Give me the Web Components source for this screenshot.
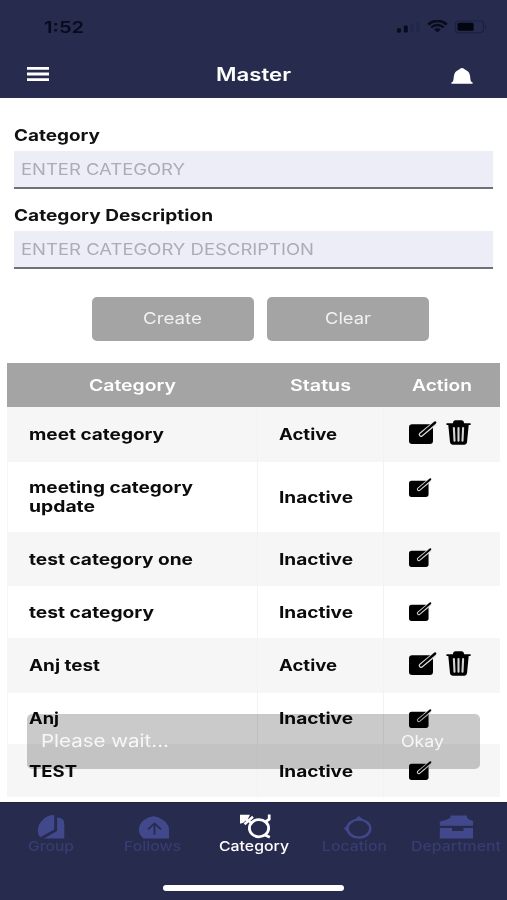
<!DOCTYPE html>
<html lang="en">
<head>
<meta charset="utf-8">
<title>Master</title>
<style>
body{margin:0;background:#fff;font-family:Inter,"Liberation Sans",sans-serif;}
</style>
</head>
<body>
<master-app></master-app>
<script>
// Defines an element whose open shadow root is filled from an HTML string.
function define(name, html, setup) {
  const t = document.createElement('template');
  customElements.define(name, class extends HTMLElement {
    connectedCallback() {
      if (this.shadowRoot) return;
      t.innerHTML = html;
      this.attachShadow({mode: 'open'}).appendChild(t.content.cloneNode(true));
      if (setup) setup(this, this.shadowRoot);
    }
  });
}

// Text widened horizontally to the width given in "w".
define('wide-text', `<style>
:host{display:block;flex:none;white-space:nowrap;line-height:19px}
span{display:inline-block;transform-origin:0 50%;vertical-align:top}
</style><span><slot></slot></span>`, (el, root) => {
  const s = root.querySelector('span'), w = +el.getAttribute('w');
  el.style.width = w + 'px';
  s.style.transform = 'scaleX(' + w / s.getBoundingClientRect().width + ')';
});

define('edit-icon', `<style>
:host{display:block;flex:none;width:22px;height:19px}
:host([large]){width:27px;height:23px}
svg{display:block;width:100%;height:100%;overflow:visible}
</style><svg viewBox="0 0 27 23" preserveAspectRatio="none">
<rect x="0" y="3.2" width="24" height="19.8" rx="3.2" fill="#000"/>
<path d="M12 13.6L25 3" stroke="#dedede" stroke-width="4.6" stroke-linecap="round"/>
<path d="M12 13.6L26.2 1.5" stroke="#000" stroke-width="2.3" stroke-linecap="round"/></svg>`);

define('trash-icon', `<style>
:host{display:block;flex:none;width:25px;height:25px}svg{display:block}
</style><svg width="25" height="25" viewBox="0 0 25 25">
<path d="M.5 3.2H6.8Q7.2 .3 9.2 .3H15.8Q17.8 .3 18.2 3.2H24.6V5H22.7L21 22.3Q20.7 24.7 18.5 24.7H6.6Q4.3 24.7 4 22.3L2.3 5H.5Z"/>
<path d="M7.9 8L8.5 20.8M12.5 8V20.8M17.1 8L16.5 20.8" stroke="#d4d4d4" stroke-width="2.1" stroke-linecap="round"/></svg>`);

define('status-bar', `<style>
:host{display:flex;height:53px;align-items:center;justify-content:space-between;padding:1px 20px 0 44px;box-sizing:border-box;color:#070b1c;font-size:16px;font-weight:600}
svg{display:block}
</style><wide-text w="40">1:52</wide-text>
<svg width="91" height="14" viewBox="396 20 91 14">
<rect x="397" y="28.2" width="4" height="4.5" rx="1.4" fill="#080c1c"/><rect x="403.8" y="25.6" width="4" height="7" rx="1.3" fill="#080c1c"/>
<rect x="410.3" y="23.3" width="3.4" height="9.4" rx="1" fill="#20284a"/><rect x="416.3" y="21" width="3.4" height="11.7" rx="1" fill="#20284a"/>
<g fill="none" stroke="#080c1c"><path d="M428.2 24.4Q437.2 17.2 446.8 24.4" stroke-width="2.6"/><path d="M431.2 27.3Q437.3 22.6 443.7 27.3" stroke-width="2.3"/></g>
<path d="M434 29.3Q437.3 27 440.9 29.3L437.4 32.4Z" fill="#080c1c"/>
<rect x="455.5" y="21" width="28" height="11.7" rx="3" fill="none" stroke="#1b2241" stroke-width="1.2"/><rect x="457.6" y="22.8" width="16" height="8" rx="1.5" fill="#04060f"/><path d="M485 24.5Q487.5 26.6 485 29Z" fill="#1b2241"/></svg>`);

define('title-bar', `<style>
:host{display:grid;grid-template-columns:50px 1fr 50px;height:45px;align-items:center;padding:0 24px 4px 27px;box-sizing:border-box;color:#fff;font-size:18px;font-weight:600}
wide-text{justify-self:center;margin:2px 3px 0 0}
svg{display:block}.b{justify-self:end;margin-top:4px;margin-right:10px}
</style><svg width="22" height="14" viewBox="0 0 22 14"><path d="M0 1.4H22M0 7H22M0 12.6H22" stroke="#fff" stroke-width="2.8"/></svg>
<wide-text w="75">Master</wide-text>
<svg class="b" width="22" height="17" viewBox="0 0 22 17"><path fill="#fff" d="M.4 16.8V15.6L2 14.5C3 12 2.3 7 5 4.6C6.5 3.2 8 2.8 9 1.8Q11 .1 13 1.8C14 2.8 15.5 3.2 17 4.6C19.7 7 19 12 20 14.5L21.6 15.6V16.8Z"/></svg>`);

define('form-field', `<style>
:host{display:block;height:80px}
.l{height:26.5px;display:flex;align-items:center;font-size:16px;font-weight:700;color:#111;padding-bottom:4px;box-sizing:border-box}
.i{height:38.5px;display:flex;align-items:center;box-sizing:border-box;padding:1px 7px 0;background:#ecedf6;border-bottom:2px solid #707176;font-size:16px;color:#acadb4}
</style><div class="l"><slot name="label"></slot></div><div class="i"><slot></slot></div>`);

define('app-button', `<style>
:host{display:flex;width:162px;height:44px;align-items:center;justify-content:center;background:#a4a4a4;border-radius:5px;color:#f1f1f1;font-size:16px}
</style><slot></slot>`);

define('table-head', `<style>
:host{display:grid;grid-template-columns:250px 126px 1fr;height:44px;padding-top:1px;box-sizing:border-box;background:#a4a4a4;color:#fff;font-size:16px;font-weight:600;align-items:center;justify-items:center}
</style><slot></slot>`);

define('category-row', `<style>
:host{display:grid;grid-template-columns:250px 126px 1fr;box-sizing:border-box;background:#fff;color:#0b0b0b;font-size:16px;font-weight:650;border-left:1px solid #f5f5f5}
:host([shade]){background:#f6f6f6}
div{display:flex;box-sizing:border-box}
.n{flex-direction:column;justify-content:center;padding:1px 0 0 21px;border-right:1px solid #f2f2f2}
.s{align-items:center;padding:1px 0 0 21px;border-right:1px solid #f2f2f2}
.a{align-items:flex-start;gap:11px;padding:16px 0 0 25px}
:host([active]) .a{padding-top:14px}
:host([last]) .n,:host([last]) .s{padding-top:3px}
:host([last]) .a{padding-top:17px}
trash-icon{margin:-1px 0 0 -1px}
</style><div class="n"><slot></slot></div><div class="s"></div><div class="a"></div>`, (el, root) => {
  const on = el.hasAttribute('active');
  root.querySelector('.s').innerHTML = on ? '<wide-text w="58">Active</wide-text>' : '<wide-text w="74">Inactive</wide-text>';
  root.querySelector('.a').innerHTML = on ? '<edit-icon large></edit-icon><trash-icon></trash-icon>' : '<edit-icon></edit-icon>';
  el.style.height = el.getAttribute('h') + 'px';
});

// Multiplied background keeps the table text beneath it dark.
define('snack-bar', `<style>
:host{position:absolute;left:27px;top:714px;width:453px;height:55px;border-radius:5px;background:#cacaca;mix-blend-mode:multiply}
</style>`);
define('snack-text', `<style>
:host{position:absolute;left:27px;top:714px;width:453px;height:55px;display:flex;align-items:center;justify-content:space-between;padding:0 36px 0 14px;box-sizing:border-box;color:#f7f7f7;font-size:17px}
.o{font-size:15.5px}
</style><wide-text w="128">Please wait...</wide-text><wide-text class="o" w="43">Okay</wide-text>`);

define('tab-item', `<style>
:host{display:flex;flex-direction:column;align-items:center;color:#363d70;font-size:13.5px;font-weight:500;padding-top:12px}
:host([active]){color:#fff}
wide-text{line-height:16px}
::slotted(svg){display:block;width:34px;height:24px;margin-bottom:-2px;overflow:visible}
</style><slot name="icon"></slot><slot></slot>`);

define('tab-bar', `<style>
:host{display:block;height:98px;background:#272b4e;border-top:1px solid #1c2345;box-sizing:border-box}
nav{display:grid;grid-template-columns:repeat(5,101.2px);justify-content:center;height:82px}
i{display:block;width:181px;height:6px;border-radius:3px;background:#fff;margin:0 auto}
</style><nav>
<tab-item><svg slot="icon" viewBox="0 0 34 24"><path transform="translate(1.8 -.2)" fill="#41498c" d="M18.4.3V14.6L4.4 22.5C.2 17 2 10 6.5 5.5C9.8 2 14 .2 18.4.3ZM21.3 2.8Q28.5 3 28.5 9V23.6H8L21.3 16.3Z"/></svg><wide-text w="46">Group</wide-text></tab-item>
<tab-item><svg slot="icon" viewBox="0 0 34 24"><g transform="translate(2 -.2)"><path fill="#41498c" d="M6.5 23.6C-.5 18 1 9.6 7 5.1Q16.5-2.1 26 5.1Q32 9 32 15V23.6Z"/><path d="M17.5 20V9M11 14.6L17.5 8.6L24 14.6" fill="none" stroke="#272b4e" stroke-width="1.8"/></g></svg><wide-text w="57">Follows</wide-text></tab-item>
<tab-item active><svg slot="icon" viewBox="0 0 34 24" fill="none" stroke="#fff"><ellipse cx="22" cy="13.2" rx="9.6" ry="8.6" stroke-width="2.8"/><path d="M3-.3H13L11.3 3.2L6.3 7.8L3 8.8Z" fill="#fff" stroke="none"/><path d="M7.5 9.2L16 1.8M9 4.5L15.5 8.5" stroke-width="2.5"/><path d="M28 7.2L32.2 4.2V-.4M28 20L32.8 22.3" stroke-width="2.7"/></svg><wide-text w="70">Category</wide-text></tab-item>
<tab-item><svg slot="icon" viewBox="0 0 34 24"><ellipse cx="20.9" cy="13.6" rx="11.4" ry="9" fill="none" stroke="#41498c" stroke-width="2.4"/><path fill="#41498c" d="M15.5 5.4L20.9 1L26.3 5.4ZM10 9.5L6 13.6L10 17.8Z"/></svg><wide-text w="65">Location</wide-text></tab-item>
<tab-item><svg slot="icon" viewBox="0 0 34 24"><path fill="#41498c" d="M.8 10.8V6.8L5 5.5L8 4.5L11.5 2.8V.4H28V2.8L30 4.5L34 6V10.8ZM.8 12.9H13V16H24.5V12.9H34V23.6H.8Z"/></svg><wide-text w="90">Department</wide-text></tab-item>
</nav><i></i>`);

define('master-app', `<style>
:host{display:flex;flex-direction:column;position:relative;width:507px;height:900px;background:#fff;overflow:hidden;isolation:isolate}
header{background:#272b4e;height:98px;flex:none}
.form{padding:26px 14px 0}
.btns{display:flex;justify-content:center;gap:13.5px;padding:12.5px 0 0 14px}
.table{margin:22px 7px 0}
tab-bar{margin-top:auto}
</style>
<header><status-bar></status-bar><title-bar></title-bar></header>
<div class="form">
<form-field><wide-text slot="label" w="86">Category</wide-text><wide-text w="164">ENTER CATEGORY</wide-text></form-field>
<form-field><wide-text slot="label" w="199">Category Description</wide-text><wide-text w="293">ENTER CATEGORY DESCRIPTION</wide-text></form-field>
</div>
<div class="btns"><app-button><wide-text w="59">Create</wide-text></app-button><app-button><wide-text w="46">Clear</wide-text></app-button></div>
<div class="table">
<table-head><wide-text w="87">Category</wide-text><wide-text w="61">Status</wide-text><wide-text w="60">Action</wide-text></table-head>
<category-row h="55" shade active><wide-text w="135">meet category</wide-text></category-row>
<category-row h="70"><wide-text w="164">meeting category</wide-text><wide-text w="66">update</wide-text></category-row>
<category-row h="54.5" shade><wide-text w="164">test category one</wide-text></category-row>
<category-row h="51.5"><wide-text w="125">test category</wide-text></category-row>
<category-row h="55" shade active><wide-text w="71">Anj test</wide-text></category-row>
<category-row h="51"><wide-text w="30">Anj</wide-text></category-row>
<category-row h="53" shade last><wide-text w="48">TEST</wide-text></category-row>
</div>
<tab-bar></tab-bar>
<snack-bar></snack-bar><snack-text></snack-text>`);
</script>
</body>
</html>
